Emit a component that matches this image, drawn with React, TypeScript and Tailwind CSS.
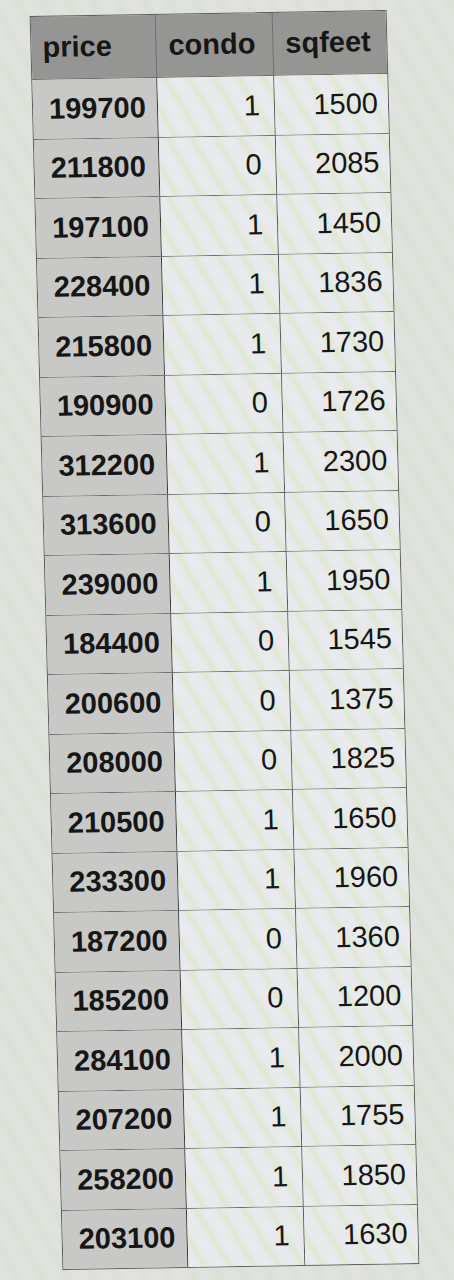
const rows: [string, string, string][] = [
  ["199700", "1", "1500"],
  ["211800", "0", "2085"],
  ["197100", "1", "1450"],
  ["228400", "1", "1836"],
  ["215800", "1", "1730"],
  ["190900", "0", "1726"],
  ["312200", "1", "2300"],
  ["313600", "0", "1650"],
  ["239000", "1", "1950"],
  ["184400", "0", "1545"],
  ["200600", "0", "1375"],
  ["208000", "0", "1825"],
  ["210500", "1", "1650"],
  ["233300", "1", "1960"],
  ["187200", "0", "1360"],
  ["185200", "0", "1200"],
  ["284100", "1", "2000"],
  ["207200", "1", "1755"],
  ["258200", "1", "1850"],
  ["203100", "1", "1630"],
]

export default function App() {
  return (
    <div
      className="h-[1280px] w-[454px] overflow-hidden bg-[repeating-linear-gradient(60deg,#dfe2dd_0px,#dfe2dd_10px,#dbe0d5_16px,#dfe2dd_22px)] pt-[13px] pl-[46px] text-[#161616]"
      style={{ fontFamily: '"Liberation Sans", Arial, sans-serif' }}
    >
      <div className="w-[357px] origin-center skew-x-[1.5deg] -skew-y-[1deg] border border-[#5a5a5a]">
        {/* Header */}
        <div className="flex h-[62px] bg-[#959694] text-[29px] font-bold">
          <div className="flex w-[125px] items-center border-r border-[#6e6e6e] pl-[11px]">price</div>
          <div className="flex w-[117px] items-center border-r border-[#6e6e6e] pl-[12px]">condo</div>
          <div className="flex flex-1 items-center pl-[12px]">sqfeet</div>
        </div>

        {rows.map(([price, condo, sqfeet], i) => (
          <div key={i} className="flex h-[59.5px] border-t border-[#6a6a6a] text-[29px]">
            <div className="flex w-[125px] items-center border-r border-[#3a3a3a] bg-[#c8c9c6] pl-[16px] font-bold">
              {price}
            </div>
            <div className="flex w-[117px] items-center justify-end border-r border-[#5a5a5a] bg-[repeating-linear-gradient(60deg,#e8eaee_0px,#e8eaee_9px,#e0e8d2_15px,#e8eaee_21px)] pr-[14px]">
              {condo}
            </div>
            <div className="flex flex-1 items-center justify-end bg-[repeating-linear-gradient(60deg,#e8eaee_0px,#e8eaee_9px,#e0e8d2_15px,#e8eaee_21px)] pr-[10px]">
              {sqfeet}
            </div>
          </div>
        ))}
      </div>
    </div>
  )
}
